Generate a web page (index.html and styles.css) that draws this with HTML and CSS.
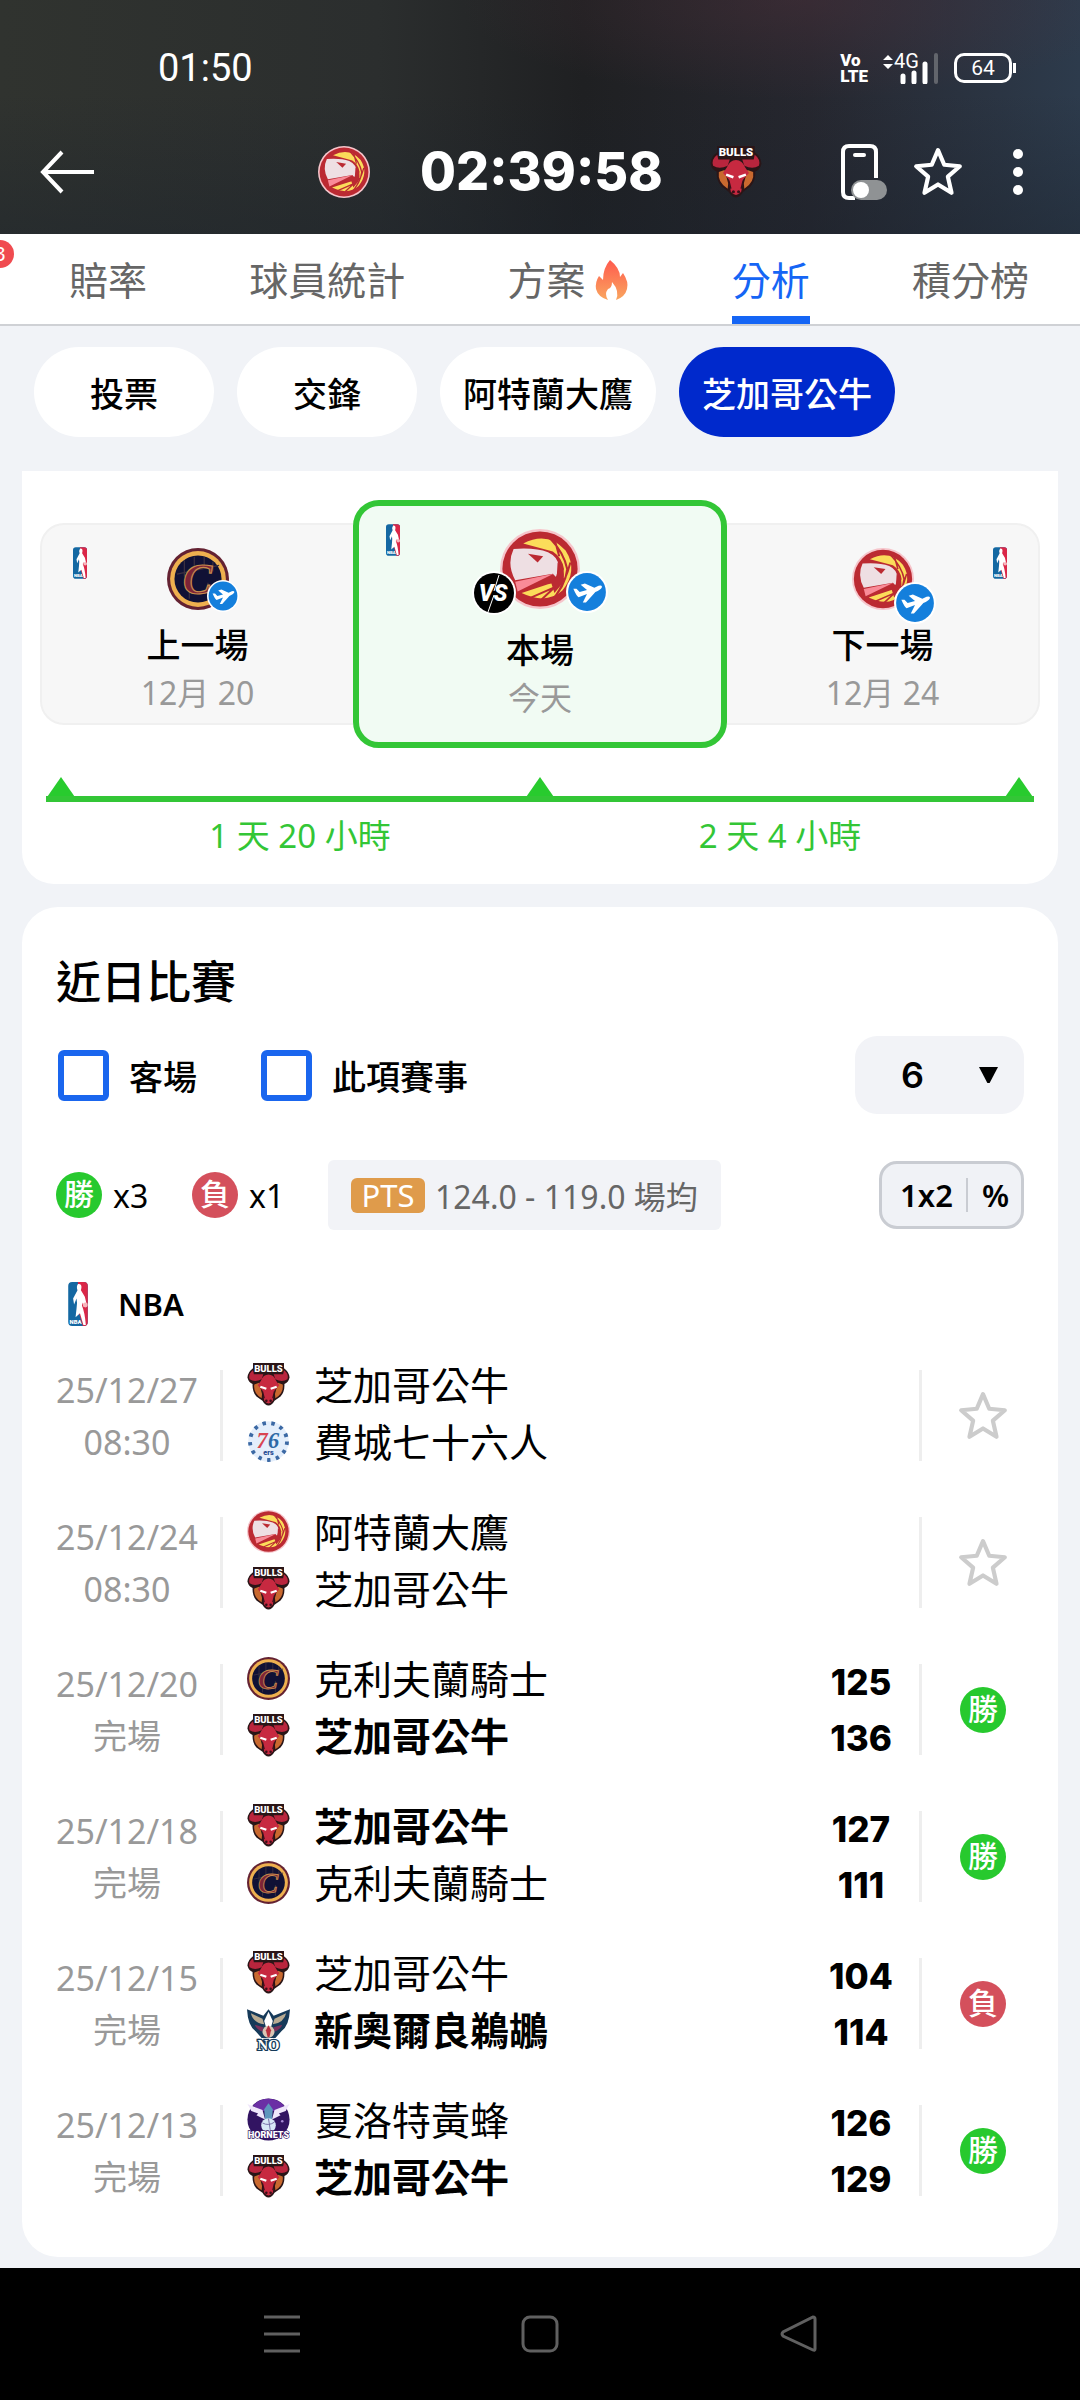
FILE: index.html
```html
<!DOCTYPE html>
<html lang="zh-Hant">
<head>
  <meta charset="UTF-8">
  <meta name="viewport" content="width=device-width, initial-scale=1.0">
  <title>分析 - 芝加哥公牛</title>
  <link rel="stylesheet" href="styles.css">
</head>
<body>

  <!-- Shared logos -->
  <svg class="sprite" aria-hidden="true">
    <symbol id="hawks" viewBox="0 0 100 100">
      <circle cx="50" cy="50" r="50" fill="#f6c5cb"/>
      <circle cx="50" cy="50" r="47" fill="#bb2a32"/>
      <path d="M29 18Q60 2 82 27Q98 52 78 77Q58 95 27 80L60 69Q78 66 80 50Q78 36 66 28Z" fill="#fbdc5a"/>
      <path d="M62 11Q80 30 84 50Q82 72 62 92M88 42Q82 66 68 86M52 88L80 62M38 86L70 72M68 12L74 34" fill="none" stroke="#bb2a32" stroke-width="2.5"/>
      <path d="M17 25Q44 23 60 29Q75 36 73 50L70 60L66 56L19 64Q8 44 17 25Z" fill="#eedfe3"/>
      <path d="M19 66L67 56L22 78Z" fill="#f98b98"/>
      <path d="M35 31L54 34L47 42Z" fill="#bb2a32"/>
      <path d="M72 42Q84 52 78 68L68 80L63 64L71 59Z" fill="#bb2a32"/>
    </symbol>
    <symbol id="bulls" viewBox="0 0 100 100">
      <path d="M14 0H86V12Q98 20 99 34Q96 46 87 49Q88 66 78 78L64 88Q58 99 50 99Q42 99 36 88L22 78Q12 66 13 49Q4 46 1 34Q2 20 14 12Z" fill="#2a1517"/>
      <path d="M14 17Q2 26 6 38Q18 46 34 38L38 26H16ZM86 17Q98 26 94 38Q82 46 66 38L62 26H84Z" fill="#b9253d"/>
      <path d="M17 50L28 46L35 72L34 82Q14 70 17 50ZM83 50L72 46L65 72L66 82Q86 70 83 50Z" fill="#c9692f"/>
      <path d="M50 27Q38 27 32 42L25 52L36 64L40 88Q50 100 60 88L64 64L75 52L68 42Q62 27 50 27Z" fill="#c72940"/>
      <path d="M31 55L45 60M69 55L55 60" stroke="#fff" stroke-width="5"/>
      <path d="M36 66L40 82M64 66L60 82" stroke="#3a1018" stroke-width="3"/>
      <circle cx="45" cy="88" r="3" fill="#3a1018"/>
      <circle cx="55" cy="88" r="3" fill="#3a1018"/>
      <text x="50" y="20" class="logo-text bulls-text">BULLS</text>
    </symbol>
    <symbol id="cavs" viewBox="0 0 100 100">
      <circle cx="50" cy="50" r="50" fill="#642232"/>
      <circle cx="50" cy="50" r="45" fill="#eeb04f"/>
      <circle cx="50" cy="50" r="38" fill="#101135"/>
      <path d="M28 20V46M44 14V34M60 14V32M74 22V38M16 42L84 28M66 56V82M36 68V82" stroke="#3b3040" stroke-width="2"/>
      <text x="49" y="74" class="logo-text cavs-text">C</text>
    </symbol>
    <symbol id="sixers" viewBox="0 0 100 100">
      <circle cx="50" cy="50" r="47" fill="#e4eefb"/>
      <circle cx="50" cy="50" r="43" fill="none" stroke="#3c69a4" stroke-width="9" stroke-dasharray="8 12.8"/>
      <text x="35" y="65" class="logo-text seven-text">7</text>
      <text x="62" y="65" class="logo-text six-text">6</text>
      <text x="50" y="82" class="logo-text ers-text">ers</text>
    </symbol>
    <symbol id="pelicans" viewBox="0 0 100 100">
      <path d="M0 3L38 18L50 3L62 18L100 3Q98 42 80 54L66 70H34L20 54Q2 42 0 3Z" fill="#163a59"/>
      <path d="M9 12L36 25L40 38Q14 34 9 12ZM91 12L64 25L60 38Q86 34 91 12Z" fill="#b8aa91"/>
      <path d="M18 39L38 45L36 55Q22 50 18 39ZM82 39L62 45L64 55Q78 50 82 39Z" fill="#7c315b"/>
      <path d="M50 9L60 30L56 44H44L40 30Z" fill="#fff"/>
      <circle cx="50" cy="55" r="14" fill="#d9c6b4"/>
      <path d="M50 40L56 52L52 68H48L44 52Z" fill="#b8303d"/>
      <text x="50" y="97" class="logo-text no-text">NO</text>
    </symbol>
    <symbol id="hornets" viewBox="0 0 100 100">
      <circle cx="50" cy="50" r="49" fill="#321462"/>
      <path d="M50 2Q72 2 86 18L66 30H34L14 18Q28 2 50 2Z" fill="#6b2fa5"/>
      <path d="M1 14L36 28L42 50L30 44L22 40L26 36L10 30ZM99 14L64 28L58 50L70 44L78 40L74 36L90 30Z" fill="#efe6fb"/>
      <path d="M50 12L60 26L58 52H42L40 26Z" fill="#5e96bd"/>
      <circle cx="50" cy="64" r="17" fill="#d8e8f6"/>
      <path d="M36 58Q50 66 64 56M50 48L54 74" stroke="#6b5f9d" stroke-width="2" fill="none"/>
      <circle cx="82" cy="54" r="3" fill="#a88ad6"/>
      <text x="50" y="94" class="logo-text hornets-text">HORNETS</text>
    </symbol>
    <symbol id="nba" viewBox="0 0 40 90">
      <rect width="40" height="90" rx="8" fill="#1468a2"/>
      <path d="M20 0H32Q40 0 40 8V82Q40 90 32 90H30L18 50Z" fill="#da2748"/>
      <path d="M20 4Q28 3 27 12L26 17L34 30L38 47L31 50L30 42L28 48Q34 62 36 88H31L24 64L15 72L17 54Q19 42 17 34L12 46L10 34L19 17Q16 9 20 4Z" fill="#fff"/>
      <circle cx="35" cy="47" r="5" fill="#f7b5bc"/>
      <text x="15" y="85" class="logo-text nba-text">NBA</text>
    </symbol>
    <symbol id="plane" viewBox="0 0 40 40">
      <circle cx="20" cy="20" r="20" fill="#fff"/>
      <circle cx="20" cy="20" r="18" fill="#147fdc"/>
      <path d="M7 17L10 17L13 20L20 18L14 13L18 12L27 16L31 14Q35 13 34 16Q33 18 28 20L19 30L16 30L20 22L12 25Q10 24 7 17Z" fill="#fff"/>
    </symbol>
    <symbol id="star" viewBox="0 0 50 50">
      <path d="M25 4L31 18L46 19.500L34.500 29.500L38 45L25 37L12 45L15.500 29.500L4 19.500L19 18Z" fill="none" stroke="currentColor" stroke-width="4" stroke-linejoin="round"/>
    </symbol>
  </svg>

  <header class="top">
    <div class="status-bar">
      <span class="clock">01:50</span>
      <div class="status-icons">
        <span class="volte">Vo<br>LTE</span>
        <svg class="signal" viewBox="0 0 58 32" aria-hidden="true">
          <path d="M1 8L6 3L11 8ZM1 12L6 17L11 12Z" fill="#fff"/>
          <text x="12" y="16" class="signal-text">4G</text>
          <path d="M21 30V24M32 30V21M43 30V12" stroke="#fff" stroke-width="5" stroke-linecap="round"/>
          <path d="M54 30V3" stroke="#62656c" stroke-width="4" stroke-linecap="round"/>
        </svg>
        <span class="battery">64</span>
      </div>
    </div>
    <div class="title-bar">
      <button class="icon-btn back" aria-label="返回">
        <svg width="54" height="46" viewBox="0 0 54 46"><path d="M22 3L3 23L22 43M4 23H54" fill="none" stroke="#fff" stroke-width="4"/></svg>
      </button>
      <div class="match-title">
        <svg class="team-logo"><use href="#hawks"/></svg>
        <span class="countdown">02:39:58</span>
        <svg class="team-logo"><use href="#bulls"/></svg>
      </div>
      <div class="title-actions">
        <button class="icon-btn" aria-label="懸浮窗">
          <svg width="47" height="56" viewBox="0 0 47 56">
            <path d="M14 54H8Q2 54 2 48V8Q2 2 8 2H29Q35 2 35 8V34" fill="none" stroke="#fff" stroke-width="4"/>
            <rect x="12" y="9" width="13" height="4" rx="2" fill="#fff"/>
            <rect x="10" y="36" width="36" height="20" rx="10" fill="#8f9294"/>
            <circle cx="20" cy="46" r="8" fill="#fff"/>
          </svg>
        </button>
        <button class="icon-btn" aria-label="收藏"><svg class="title-star"><use href="#star"/></svg></button>
        <button class="icon-btn more" aria-label="更多">
          <svg width="12" height="48" viewBox="0 0 12 48" fill="#fff"><circle cx="6" cy="6" r="5"/><circle cx="6" cy="24" r="5"/><circle cx="6" cy="42" r="5"/></svg>
        </button>
      </div>
    </div>
  </header>

  <nav class="tabs">
    <span class="badge">3</span>
    <a href="#odds">賠率</a>
    <a href="#players">球員統計</a>
    <a href="#plans">方案
      <svg width="34" height="40" viewBox="0 0 34 40" aria-hidden="true">
        <defs><linearGradient id="fire" x1="0" y1="0" x2="0" y2="1"><stop offset="0" stop-color="#ff5a4e"/><stop offset="1" stop-color="#f9a65f"/></linearGradient></defs>
        <path d="M15 0Q25 8 25 17L28 13Q34 22 32 29Q30 37 21 40Q25 31 17 22Q17 28 13 29Q9 34 13 40Q3 37 1 29Q0 22 4 16L8 20Q8 8 15 0Z" fill="url(#fire)"/>
      </svg>
    </a>
    <a href="#analysis" class="active">分析</a>
    <a href="#standings">積分榜</a>
  </nav>

  <main>
    <div class="pills">
      <button>投票</button>
      <button>交鋒</button>
      <button>阿特蘭大鷹</button>
      <button class="selected">芝加哥公牛</button>
    </div>

    <!-- Schedule -->
    <section class="card schedule">
      <div class="games">
        <div class="game prev">
          <svg class="league"><use href="#nba"/></svg>
          <div class="opponent">
            <svg class="opp-logo"><use href="#cavs"/></svg>
            <svg class="away small"><use href="#plane"/></svg>
          </div>
          <strong>上一場</strong>
          <span>12月 20</span>
        </div>
        <div class="game current">
          <svg class="league"><use href="#nba"/></svg>
          <div class="opponent">
            <svg class="opp-logo"><use href="#hawks"/></svg>
            <svg class="versus" viewBox="0 0 44 44">
              <circle cx="22" cy="22" r="22" fill="#fff"/>
              <circle cx="22" cy="22" r="20" fill="#000"/>
              <text x="21" y="30" class="logo-text vs-text">VS</text>
              <path d="M27 4L22 20M22 24L16 41" stroke="#fff" stroke-width="1"/>
            </svg>
            <svg class="away"><use href="#plane"/></svg>
          </div>
          <strong>本場</strong>
          <span>今天</span>
        </div>
        <div class="game next">
          <svg class="league"><use href="#nba"/></svg>
          <div class="opponent">
            <svg class="opp-logo"><use href="#hawks"/></svg>
            <svg class="away"><use href="#plane"/></svg>
          </div>
          <strong>下一場</strong>
          <span>12月 24</span>
        </div>
      </div>
      <div class="timeline"><i></i><i></i><i></i></div>
      <div class="intervals">
        <span>1 天 20 小時</span>
        <span>2 天 4 小時</span>
      </div>
    </section>

    <!-- Recent matches -->
    <section class="card recent">
      <h2>近日比賽</h2>
      <div class="filters">
        <label><input type="checkbox">客場</label>
        <label><input type="checkbox">此項賽事</label>
        <div class="count">
          <select aria-label="場數"><option>6</option><option>10</option></select>
        </div>
      </div>
      <div class="summary">
        <span class="result win">勝</span><span class="times">x3</span>
        <span class="result lose">負</span><span class="times">x1</span>
        <div class="average"><b>PTS</b>124.0 - 119.0 場均</div>
        <button class="mode"><span>1x2</span><span>%</span></button>
      </div>
      <h3><svg><use href="#nba"/></svg>NBA</h3>

      <table>
        <tr>
          <td class="date">25/12/27<br>08:30</td>
          <td class="teams">
            <div><svg><use href="#bulls"/></svg>芝加哥公牛</div>
            <div><svg><use href="#sixers"/></svg>費城七十六人</div>
          </td>
          <td class="score"></td>
          <td class="mark"><button class="icon-btn" aria-label="收藏"><svg><use href="#star"/></svg></button></td>
        </tr>
        <tr>
          <td class="date">25/12/24<br>08:30</td>
          <td class="teams">
            <div><svg><use href="#hawks"/></svg>阿特蘭大鷹</div>
            <div><svg><use href="#bulls"/></svg>芝加哥公牛</div>
          </td>
          <td class="score"></td>
          <td class="mark"><button class="icon-btn" aria-label="收藏"><svg><use href="#star"/></svg></button></td>
        </tr>
        <tr>
          <td class="date">25/12/20<br>完場</td>
          <td class="teams">
            <div><svg><use href="#cavs"/></svg>克利夫蘭騎士</div>
            <div class="winner"><svg><use href="#bulls"/></svg>芝加哥公牛</div>
          </td>
          <td class="score">125<br>136</td>
          <td class="mark"><span class="result win">勝</span></td>
        </tr>
        <tr>
          <td class="date">25/12/18<br>完場</td>
          <td class="teams">
            <div class="winner"><svg><use href="#bulls"/></svg>芝加哥公牛</div>
            <div><svg><use href="#cavs"/></svg>克利夫蘭騎士</div>
          </td>
          <td class="score">127<br>111</td>
          <td class="mark"><span class="result win">勝</span></td>
        </tr>
        <tr>
          <td class="date">25/12/15<br>完場</td>
          <td class="teams">
            <div><svg><use href="#bulls"/></svg>芝加哥公牛</div>
            <div class="winner"><svg><use href="#pelicans"/></svg>新奧爾良鵜鶘</div>
          </td>
          <td class="score">104<br>114</td>
          <td class="mark"><span class="result lose">負</span></td>
        </tr>
        <tr>
          <td class="date">25/12/13<br>完場</td>
          <td class="teams">
            <div><svg><use href="#hornets"/></svg>夏洛特黃蜂</div>
            <div class="winner"><svg><use href="#bulls"/></svg>芝加哥公牛</div>
          </td>
          <td class="score">126<br>129</td>
          <td class="mark"><span class="result win">勝</span></td>
        </tr>
      </table>
    </section>
  </main>

  <footer class="system-nav">
    <button class="icon-btn" aria-label="最近"><svg width="38" height="38" viewBox="0 0 38 38"><path d="M1 2H37M1 19H37M1 36H37"/></svg></button>
    <button class="icon-btn" aria-label="主頁"><svg width="38" height="38" viewBox="0 0 38 38"><rect x="2" y="2" width="34" height="34" rx="7"/></svg></button>
    <button class="icon-btn" aria-label="返回"><svg width="38" height="38" viewBox="0 0 38 38"><path d="M34 2Q36 2 36 4V34Q36 36 34 35L4 21Q2 19 4 17Z"/></svg></button>
  </footer>

</body>
</html>
```
FILE: styles.css
```css
* {
  box-sizing: border-box;
}

body {
  margin: 0;
  background-color: #f1f3f7;
  color: #000;
  font-family: 'Noto Sans', 'Noto Sans CJK TC', sans-serif;
}

button, select {
  font-family: inherit;
  color: inherit;
}

svg {
  display: block;
}

.sprite {
  display: none;
}

.icon-btn {
  background: none;
  border: none;
  padding: 0;
  cursor: pointer;
}

/* Text inside the logos */
.logo-text {
  font-family: 'Roboto', sans-serif;
  font-weight: 900;
  text-anchor: middle;
  fill: #fff;
}

.bulls-text {
  font-size: 22px;
}

.cavs-text {
  font-family: 'Liberation Serif', serif;
  font-style: italic;
  font-size: 70px;
  font-weight: 700;
  fill: #7d2437;
  stroke: #c58a4c;
  stroke-width: 2px;
}

.seven-text, .six-text {
  font-family: 'Liberation Serif', serif;
  font-style: italic;
  font-size: 52px;
  fill: #d94452;
}

.six-text {
  fill: #2d68a5;
}

.ers-text {
  font-size: 17px;
  fill: #2d4f95;
}

.no-text {
  font-family: 'Liberation Serif', serif;
  font-size: 34px;
  stroke: #163a59;
  stroke-width: 6px;
  paint-order: stroke;
}

.hornets-text {
  font-size: 21px;
  stroke: #321462;
  stroke-width: 3px;
  paint-order: stroke;
}

.nba-text {
  font-size: 12px;
}

.vs-text {
  font-size: 23px;
  font-style: italic;
}

/* Header */
.top {
  background-color: #1e2022;
  background-image:
    radial-gradient(ellipse at 74% 0, rgba(84, 50, 60, 0.4), transparent 30%),
    linear-gradient(to top, rgba(26, 34, 44, 0.4), transparent 60%),
    linear-gradient(to right, #30332f, #2b2e2e 35%, #1f2022 54%, #26272f 75%, #2d3b4c);
  color: #fff;
}

.status-bar {
  display: flex;
  align-items: center;
  justify-content: space-between;
  height: 110px;
  padding: 26px 64px 0 158px;
}

.clock {
  font-family: 'Roboto', sans-serif;
  font-size: 38px;
}

.status-icons {
  display: flex;
  align-items: center;
  gap: 14px;
}

.volte {
  font-family: 'Roboto', sans-serif;
  font-size: 17px;
  font-weight: 900;
  line-height: 16px;
}

.signal {
  width: 58px;
  height: 32px;
}

.signal-text {
  font-family: 'Roboto', sans-serif;
  font-size: 20px;
  fill: #fff;
}

.battery {
  position: relative;
  width: 58px;
  height: 30px;
  margin-right: 4px;
  border: 3px solid #fff;
  border-radius: 10px;
  font-family: 'Roboto', sans-serif;
  font-size: 21px;
  line-height: 24px;
  text-align: center;
}

.battery::after {
  content: '';
  position: absolute;
  top: 7px;
  right: -7px;
  width: 3px;
  height: 10px;
  background-color: #fff;
}

.title-bar {
  display: grid;
  grid-template-columns: 1fr auto 1fr;
  align-items: center;
  height: 124px;
  padding: 0 32px;
}

.back {
  justify-self: start;
  padding-left: 8px;
}

.match-title {
  display: flex;
  align-items: center;
  gap: 50px;
}

.team-logo {
  width: 52px;
  height: 52px;
}

.countdown {
  width: 240px;
  font-family: 'Inter', sans-serif;
  font-size: 52px;
  font-weight: 800;
  line-height: 60px;
  text-align: center;
  white-space: nowrap;
}

.title-actions {
  display: flex;
  align-items: center;
  justify-content: flex-end;
  gap: 24px;
}

.title-star {
  width: 52px;
  height: 52px;
}

.more {
  display: flex;
  justify-content: center;
  width: 60px;
}

/* Tabs */
.tabs {
  position: relative;
  display: flex;
  justify-content: space-between;
  height: 92px;
  padding: 0 51px 0 69px;
  overflow: hidden;
  background-color: #fff;
  border-bottom: 2px solid #cfd1d5;
}

.tabs a {
  display: flex;
  align-items: center;
  gap: 10px;
  padding-top: 10px;
  border-bottom: 8px solid transparent;
  color: #666;
  font-size: 39px;
  line-height: 56px;
  text-decoration: none;
  white-space: nowrap;
}

.tabs .active {
  border-color: #1565f5;
  color: #1565f5;
}

.badge {
  position: absolute;
  top: 6px;
  left: -14px;
  width: 28px;
  height: 28px;
  border-radius: 50%;
  background-color: #f04b50;
  color: #fff;
  font-size: 20px;
  line-height: 28px;
  text-align: center;
}

/* Section pills */
.pills {
  display: flex;
  gap: 23px;
  padding: 21px 34px 34px;
}

.pills button {
  min-width: 180px;
  height: 90px;
  padding: 0 23px;
  border: none;
  border-radius: 45px;
  background-color: #fff;
  font-size: 34px;
  font-weight: 500;
  white-space: nowrap;
  cursor: pointer;
}

.pills .selected {
  background-color: #0029cc;
  color: #fff;
}

.card {
  margin: 0 22px;
  background-color: #fff;
  border-radius: 36px;
}

/* Schedule */
.schedule {
  padding: 29px 18px 24px;
  border-radius: 0 0 32px 32px;
}

.games {
  display: grid;
  grid-template-columns: 313fr 374fr 313fr;
  align-items: center;
}

.game {
  position: relative;
  display: flex;
  flex-direction: column;
  align-items: center;
  height: 202px;
  padding-top: 23px;
  background-color: #f7f7f7;
  border: 2px solid #f0f0f0;
}

.prev {
  border-right: none;
  border-radius: 24px 0 0 24px;
}

.next {
  border-left: none;
  border-radius: 0 24px 24px 0;
}

.current {
  height: 248px;
  background-color: #f1fbf3;
  border: 6px solid #33c636;
  border-radius: 26px;
}

.league {
  position: absolute;
  top: 22px;
  left: 31px;
  width: 14px;
  height: 32px;
}

.current .league {
  top: 18px;
  left: 27px;
}

.next .league {
  right: 31px;
  left: auto;
}

.opponent {
  position: relative;
}

.opp-logo {
  width: 62px;
  height: 62px;
}

.current .opp-logo {
  width: 80px;
  height: 80px;
}

.away {
  position: absolute;
  right: -22px;
  bottom: -14px;
  width: 42px;
  height: 42px;
}

.away.small {
  right: -10px;
  bottom: -2px;
  width: 32px;
  height: 32px;
}

.current .away {
  right: -28px;
  bottom: -4px;
}

.versus {
  position: absolute;
  bottom: -6px;
  left: -28px;
  width: 44px;
  height: 44px;
}

.game strong {
  margin-top: 11px;
  font-size: 34px;
  font-weight: 500;
  line-height: 48px;
}

.game span {
  color: #999;
  font-size: 32px;
  line-height: 48px;
}

.current strong {
  margin-top: 17px;
}

.timeline {
  display: flex;
  justify-content: space-between;
  margin: 29px 6px 0;
  border-bottom: 6px solid #33c636;
}

.timeline i {
  width: 30px;
  height: 19px;
  background-color: #28cb2e;
  clip-path: polygon(50% 0, 94% 100%, 6% 100%);
}

.intervals {
  display: grid;
  grid-template-columns: 1fr 1fr;
  margin: 10px 20px 0;
  color: #33c636;
  font-size: 33px;
  line-height: 48px;
  text-align: center;
}

/* Recent matches */
.recent {
  margin-top: 23px;
  margin-bottom: 11px;
  padding: 43px 34px 33px;
}

.recent h2 {
  margin: 0;
  font-size: 45px;
  font-weight: 500;
  line-height: 64px;
}

.filters {
  display: flex;
  align-items: center;
  gap: 62px;
  margin-top: 22px;
}

.filters label {
  display: flex;
  align-items: center;
  gap: 20px;
  font-size: 34px;
  font-weight: 500;
}

.filters input {
  appearance: none;
  width: 51px;
  height: 51px;
  margin: 0 0 0 2px;
  border: 6px solid #1a66ee;
  border-radius: 6px;
  background-color: #fff;
}

.count {
  position: relative;
  margin-left: auto;
}

.count::after {
  content: '';
  position: absolute;
  top: 31px;
  right: 26px;
  width: 19px;
  height: 16px;
  background-color: #000;
  clip-path: polygon(0 0, 100% 0, 56% 100%, 44% 100%);
  pointer-events: none;
}

.count select {
  appearance: none;
  width: 169px;
  height: 78px;
  padding: 0 46px;
  border: none;
  border-radius: 22px;
  background-color: #f2f3f7;
  font-family: 'Inter', sans-serif;
  font-size: 36px;
  font-weight: 600;
}

.summary {
  display: flex;
  align-items: center;
  margin-top: 46px;
}

.result {
  display: inline-block;
  width: 46px;
  height: 46px;
  border-radius: 50%;
  color: #fff;
  font-size: 30px;
  font-weight: 500;
  line-height: 44px;
  text-align: center;
}

.win {
  background-color: #27c92e;
}

.lose {
  background-color: #d4505c;
}

.times {
  width: 90px;
  padding-left: 11px;
  font-size: 32px;
}

.average {
  display: flex;
  align-items: center;
  gap: 10px;
  height: 70px;
  padding: 0 23px;
  border-radius: 6px;
  background-color: #f2f3f7;
  color: #666;
  font-size: 32px;
  white-space: nowrap;
}

.average b {
  width: 74px;
  border-radius: 6px;
  background-color: #df9b4b;
  color: #fff;
  font-size: 31px;
  font-weight: 400;
  line-height: 35px;
  text-align: center;
}

.mode {
  display: flex;
  align-items: center;
  height: 68px;
  margin-left: auto;
  padding: 0;
  border: 3px solid #c9ccd2;
  border-radius: 18px;
  background-color: #f0f2f6;
  font-size: 31px;
  font-weight: 600;
  line-height: 34px;
}

.mode span {
  padding: 0 13px 0 18px;
}

.mode span + span {
  padding: 0 12px 0 14px;
  border-left: 2px solid #c9ccd2;
}

.recent h3 {
  display: flex;
  align-items: center;
  gap: 30px;
  margin: 50px 0 14px;
  padding-left: 12px;
  font-size: 31px;
  font-weight: 600;
  line-height: 48px;
}

.recent h3 svg {
  width: 20px;
  height: 44px;
}

/* Match list */
table {
  width: 100%;
  border-collapse: collapse;
}

td {
  height: 147px;
  padding: 0;
}

.date {
  width: 161px;
  padding-right: 22px;
  color: #999;
  font-size: 34px;
  line-height: 52px;
  text-align: center;
  white-space: nowrap;
}

.teams {
  padding-bottom: 6px;
  background: linear-gradient(#eee, #eee) left center / 3px 91px no-repeat;
  font-size: 39px;
  line-height: 57px;
}

.teams div {
  display: flex;
  align-items: center;
  gap: 24px;
  padding-left: 27px;
}

.teams svg {
  width: 43px;
  height: 43px;
}

.winner {
  font-weight: 700;
}

.score {
  width: 118px;
  padding-right: 4px;
  background: linear-gradient(#eee, #eee) right center / 3px 91px no-repeat;
  font-family: 'Inter', sans-serif;
  font-size: 35px;
  font-weight: 800;
  line-height: 56px;
  text-align: center;
}

.mark {
  width: 102px;
  padding-left: 20px;
  text-align: center;
}

.mark .icon-btn {
  vertical-align: middle;
}

.mark svg {
  width: 52px;
  height: 52px;
  color: #ccc;
}

/* System navigation */
.system-nav {
  display: flex;
  align-items: center;
  justify-content: center;
  gap: 220px;
  height: 132px;
  background-color: #000;
}

.system-nav svg {
  fill: none;
  stroke: #606060;
  stroke-width: 3px;
}
```
